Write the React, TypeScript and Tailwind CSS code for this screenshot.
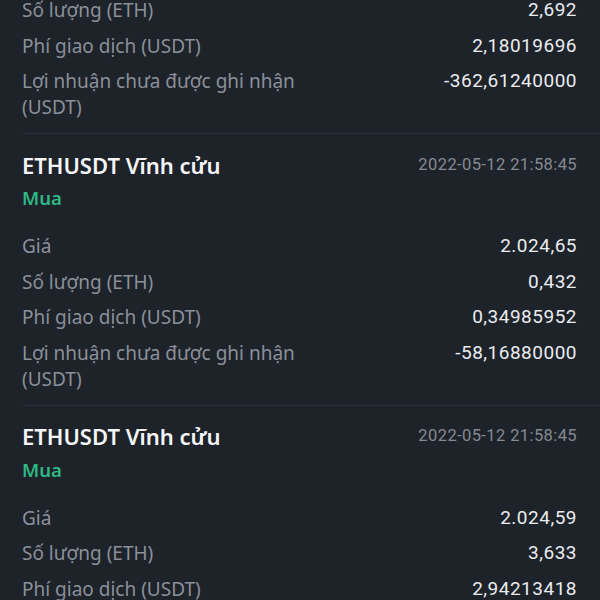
import { FC } from "react";

type Row = { label: string; value: string };

const labelFont = { fontFamily: "'Noto Sans', 'Open Sans', sans-serif" };

const DetailRow: FC<Row> = ({ label, value }) => (
    <div className="flex justify-between items-start gap-4">
        <span className="text-[19px] leading-[26px] text-[#8b9099] max-w-[300px]">{label}</span>
        <span className="font-['Roboto',sans-serif] text-[19px] leading-[26px] tracking-[0.5px] text-[#eaecef]">
            {value}
        </span>
    </div>
);

const Rows: FC<{ rows: Row[] }> = ({ rows }) => (
    <div className="flex flex-col gap-[9.5px]">
        {rows.map((r) => (
            <DetailRow key={r.label} {...r} />
        ))}
    </div>
);

const TradeCard: FC<{ time: string; rows: Row[] }> = ({ time, rows }) => (
    <div className="ml-[22px] pr-[23px] pt-[16px] pb-[13px] border-b border-[#2a2f37]">
        <div className="flex justify-between items-center h-[30px]">
            <span className="text-[22px] font-semibold text-[#f5f5f5]">ETHUSDT Vĩnh cửu</span>
            <span className="font-['Roboto',sans-serif] text-[16.5px] tracking-[0.4px] text-[#858a93]">{time}</span>
        </div>
        <div className="mt-[5px] mb-[22px] text-[18.5px] leading-[26px] font-semibold text-[#2eb884]">Mua</div>
        <Rows rows={rows} />
    </div>
);

const App: FC = () => {
    return (
        <div className="w-[600px] h-[600px] overflow-hidden bg-[#1e2229]" style={labelFont}>
            <div className="ml-[22px] pr-[23px] -mt-[3px] pb-[13px] border-b border-[#2a2f37]">
                <Rows
                    rows={[
                        { label: "Số lượng (ETH)", value: "2,692" },
                        { label: "Phí giao dịch (USDT)", value: "2,18019696" },
                        { label: "Lợi nhuận chưa được ghi nhận (USDT)", value: "-362,61240000" },
                    ]}
                />
            </div>
            <TradeCard
                time="2022-05-12 21:58:45"
                rows={[
                    { label: "Giá", value: "2.024,65" },
                    { label: "Số lượng (ETH)", value: "0,432" },
                    { label: "Phí giao dịch (USDT)", value: "0,34985952" },
                    { label: "Lợi nhuận chưa được ghi nhận (USDT)", value: "-58,16880000" },
                ]}
            />
            <TradeCard
                time="2022-05-12 21:58:45"
                rows={[
                    { label: "Giá", value: "2.024,59" },
                    { label: "Số lượng (ETH)", value: "3,633" },
                    { label: "Phí giao dịch (USDT)", value: "2,94213418" },
                    { label: "Lợi nhuận chưa được ghi nhận (USDT)", value: "-" },
                ]}
            />
        </div>
    );
};

export default App;
